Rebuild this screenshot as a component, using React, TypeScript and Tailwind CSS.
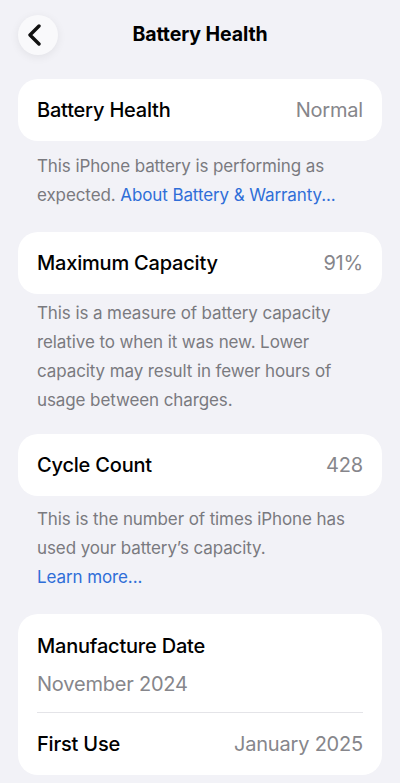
import React from "react";

const font = { fontFamily: "Inter, 'Noto Sans', sans-serif" };

function Row({ label, value }: { label: string; value: string }) {
  return (
    <div className="mx-[18px] flex h-[62px] items-center justify-between rounded-[20px] bg-white px-[19px]">
      <span className="text-[20px] font-medium tracking-[-0.2px] text-black">{label}</span>
      <span className="text-[20px] tracking-[-0.2px] text-[#86868b]">{value}</span>
    </div>
  );
}

function Note({ children, className = "" }: { children: React.ReactNode; className?: string }) {
  return (
    <div className={`px-[37px] text-[17px] leading-[29px] tracking-[-0.1px] text-[#7a7a7f] ${className}`}>
      {children}
    </div>
  );
}

export default function App() {
  return (
    <div style={font} className="min-h-[783px] w-[400px] bg-[#f2f2f7] pt-[15px] pb-4">
      {/* nav bar */}
      <header className="relative flex h-[40px] items-center justify-center">
        <button className="absolute left-[18px] top-0 flex h-[40px] w-[40px] items-center justify-center rounded-full bg-[#f9f9fb] shadow-[0_2px_10px_rgba(0,0,0,0.07)]">
          <svg width="22" height="22" viewBox="0 0 22 22" className="-ml-[4px]">
            <path d="M14 2 L5 11 L14 20" fill="none" stroke="#111" strokeWidth="3.4" strokeLinecap="round" strokeLinejoin="round" />
          </svg>
        </button>
        <h1 className="text-[19.5px] font-bold tracking-[-0.1px] text-black">Battery Health</h1>
      </header>

      <div className="mt-[24px]">
        <Row label="Battery Health" value="Normal" />
      </div>
      <Note className="mt-[11px]">
        <div>This iPhone battery is performing as</div>
        <div className="flex">
          <span className="whitespace-pre">expected. </span>
          <span className="text-[#2f6ed8]">About Battery &amp; Warranty...</span>
        </div>
      </Note>

      <div className="mt-[22px]">
        <Row label="Maximum Capacity" value="91%" />
      </div>
      <Note className="mt-[5px]">
        This is a measure of battery capacity relative to when it was new. Lower capacity may result in fewer hours of usage between charges.
      </Note>

      <div className="mt-[19px]">
        <Row label="Cycle Count" value="428" />
      </div>
      <Note className="mt-[9px]">
        <div>This is the number of times iPhone has used your battery’s capacity.</div>
        <div className="text-[#2f6ed8]">Learn more...</div>
      </Note>

      <div className="mx-[18px] mt-[22px] rounded-[20px] bg-white pt-[20px]">
        <div className="px-[19px]">
          <div className="text-[20px] font-medium leading-[24px] tracking-[-0.2px] text-black">Manufacture Date</div>
          <div className="mt-[14px] text-[20px] leading-[24px] tracking-[-0.2px] text-[#86868b]">November 2024</div>
        </div>
        <div className="mx-[19px] mt-[16px] h-px bg-[#e4e4e8]" />
        <div className="flex h-[62px] items-center justify-between px-[19px]">
          <span className="text-[20px] font-medium tracking-[-0.2px] text-black">First Use</span>
          <span className="text-[20px] tracking-[-0.2px] text-[#86868b]">January 2025</span>
        </div>
      </div>
    </div>
  );
}
